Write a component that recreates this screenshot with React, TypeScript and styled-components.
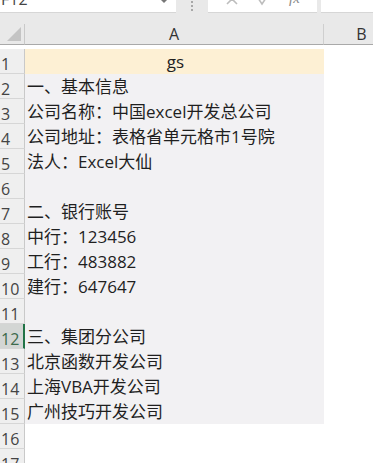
import React from 'react'
import styled, { createGlobalStyle } from 'styled-components'

const GlobalStyle = createGlobalStyle`
  html, body {
    margin: 0;
    padding: 0;
    background: #ffffff;
    overflow: hidden;
  }
`

const Sheet = styled.div`
  width: 373px;
  height: 463px;
  overflow: hidden;
  background: #ffffff;
  font-family: "Open Sans", "Noto Sans CJK SC", sans-serif;
`

const Toolbar = styled.div`
  display: flex;
  align-items: flex-start;
  height: 24px;
  background: #e9e9e9;
`

const NameBox = styled.div`
  width: 176px;
  height: 13px;
  background: #ffffff;
  overflow: hidden;
  position: relative;
  border-bottom: 1px solid #d6d6d6;
  box-sizing: border-box;
`

const NameText = styled.span`
  display: block;
  margin-top: -12px;
  padding-left: 1px;
  font-size: 16px;
  line-height: 22px;
  color: #444;
`

const DropMark = styled.span`
  position: absolute;
  right: 9px;
  top: 0;
  width: 0;
  height: 0;
  border-left: 3px solid transparent;
  border-right: 3px solid transparent;
  border-top: 3px solid #777;
`

const Grip = styled.div`
  width: 32px;
  height: 13px;
  display: flex;
  flex-direction: column;
  align-items: center;
  gap: 2px;
  padding-top: 1px;
  box-sizing: border-box;
`

const GripDot = styled.span`
  width: 2px;
  height: 2px;
  background: #a8a8a8;
`

const FxBox = styled.div`
  width: 109px;
  height: 13px;
  background: #ffffff;
  display: flex;
  align-items: flex-start;
  justify-content: space-around;
  padding: 0 8px;
  box-sizing: border-box;
  overflow: hidden;
  border-bottom: 1px solid #d6d6d6;
`

const FxLabel = styled.span`
  display: block;
  margin-top: -10px;
  font-family: "Liberation Serif", serif;
  font-style: italic;
  font-size: 15px;
  line-height: 16px;
  color: #8a8a8a;
`

const FormulaInput = styled.div`
  flex: 1;
  margin-left: 4px;
  height: 13px;
  background: #ffffff;
  border-bottom: 1px solid #d6d6d6;
  box-sizing: border-box;
`

const Grid = styled.div`
  display: grid;
  grid-template-columns: 25px 299px 76px;
  grid-auto-rows: 25px;
`

const Corner = styled.div`
  height: 21px;
  background: #e9e9e9;
  border-right: 1px solid #c9c9c9;
  border-bottom: 1px solid #a9a9a9;
  box-sizing: border-box;
  display: flex;
  align-items: flex-end;
  justify-content: flex-end;
  padding: 0 3px 3px 0;
`

const ColHead = styled.div`
  height: 21px;
  background: #e9e9e9;
  border-right: 1px solid #cfcfcf;
  border-bottom: 1px solid #a9a9a9;
  box-sizing: border-box;
  text-align: center;
  font-size: 16px;
  line-height: 21px;
  color: #333;
`

const RowHead = styled.div<{ $active?: boolean }>`
  background: ${p => (p.$active ? '#d3d6d4' : '#efefef')};
  border-right: ${p => (p.$active ? '2px solid #217346' : '1px solid #c9c9c9')};
  border-bottom: 1px solid #d6d6d6;
  box-sizing: border-box;
  display: flex;
  align-items: flex-end;
  padding-left: 1px;
  font-size: 16px;
  line-height: 18px;
  color: ${p => (p.$active ? '#3c6a4c' : '#444')};
  overflow: hidden;
`

const Cell = styled.div<{ $fill?: string; $center?: boolean }>`
  background: ${p => p.$fill || '#ffffff'};
  padding-left: 2px;
  font-size: 17px;
  line-height: 25px;
  color: #1f1f1f;
  white-space: nowrap;
  text-align: ${p => (p.$center ? 'center' : 'left')};
`

const Blank = styled.div`
  background: #ffffff;
`

const rows: string[] = [
  'gs',
  '一、基本信息',
  '公司名称：中国excel开发总公司',
  '公司地址：表格省单元格市1号院',
  '法人：Excel大仙',
  '',
  '二、银行账号',
  '中行：123456',
  '工行：483882',
  '建行：647647',
  '',
  '三、集团分公司',
  '北京函数开发公司',
  '上海VBA开发公司',
  '广州技巧开发公司',
  '',
  '',
]

const fillFor = (i: number) => {
  if (i === 0) return '#fdf0d4'
  if (i <= 14) return '#f2f1f3'
  return '#ffffff'
}

export default function App() {
  return (
    <Sheet>
      <GlobalStyle />
      <Toolbar>
        <NameBox>
          <NameText>F12</NameText>
          <DropMark />
        </NameBox>
        <Grip>
          <GripDot />
          <GripDot />
          <GripDot />
        </Grip>
        <FxBox>
          <svg width="14" height="13" viewBox="0 0 14 13">
            <path d="M2 -6 L12 4 M12 -6 L2 4" stroke="#bdbdbd" strokeWidth="1.6" fill="none" />
          </svg>
          <svg width="14" height="13" viewBox="0 0 14 13">
            <path d="M1 -2 L5 4 L13 -8" stroke="#bdbdbd" strokeWidth="1.6" fill="none" />
          </svg>
          <FxLabel>fx</FxLabel>
        </FxBox>
        <FormulaInput />
      </Toolbar>
      <Grid>
        <Corner>
          <svg width="14" height="14" viewBox="0 0 14 14">
            <polygon points="14,0 14,14 0,14" fill="#c4c4c4" />
          </svg>
        </Corner>
        <ColHead>A</ColHead>
        <ColHead>B</ColHead>
        {rows.map((text, i) => (
          <React.Fragment key={i}>
            <RowHead $active={i === 11}>{i + 1}</RowHead>
            <Cell $fill={fillFor(i)} $center={i === 0}>{text}</Cell>
            <Blank />
          </React.Fragment>
        ))}
      </Grid>
    </Sheet>
  )
}
